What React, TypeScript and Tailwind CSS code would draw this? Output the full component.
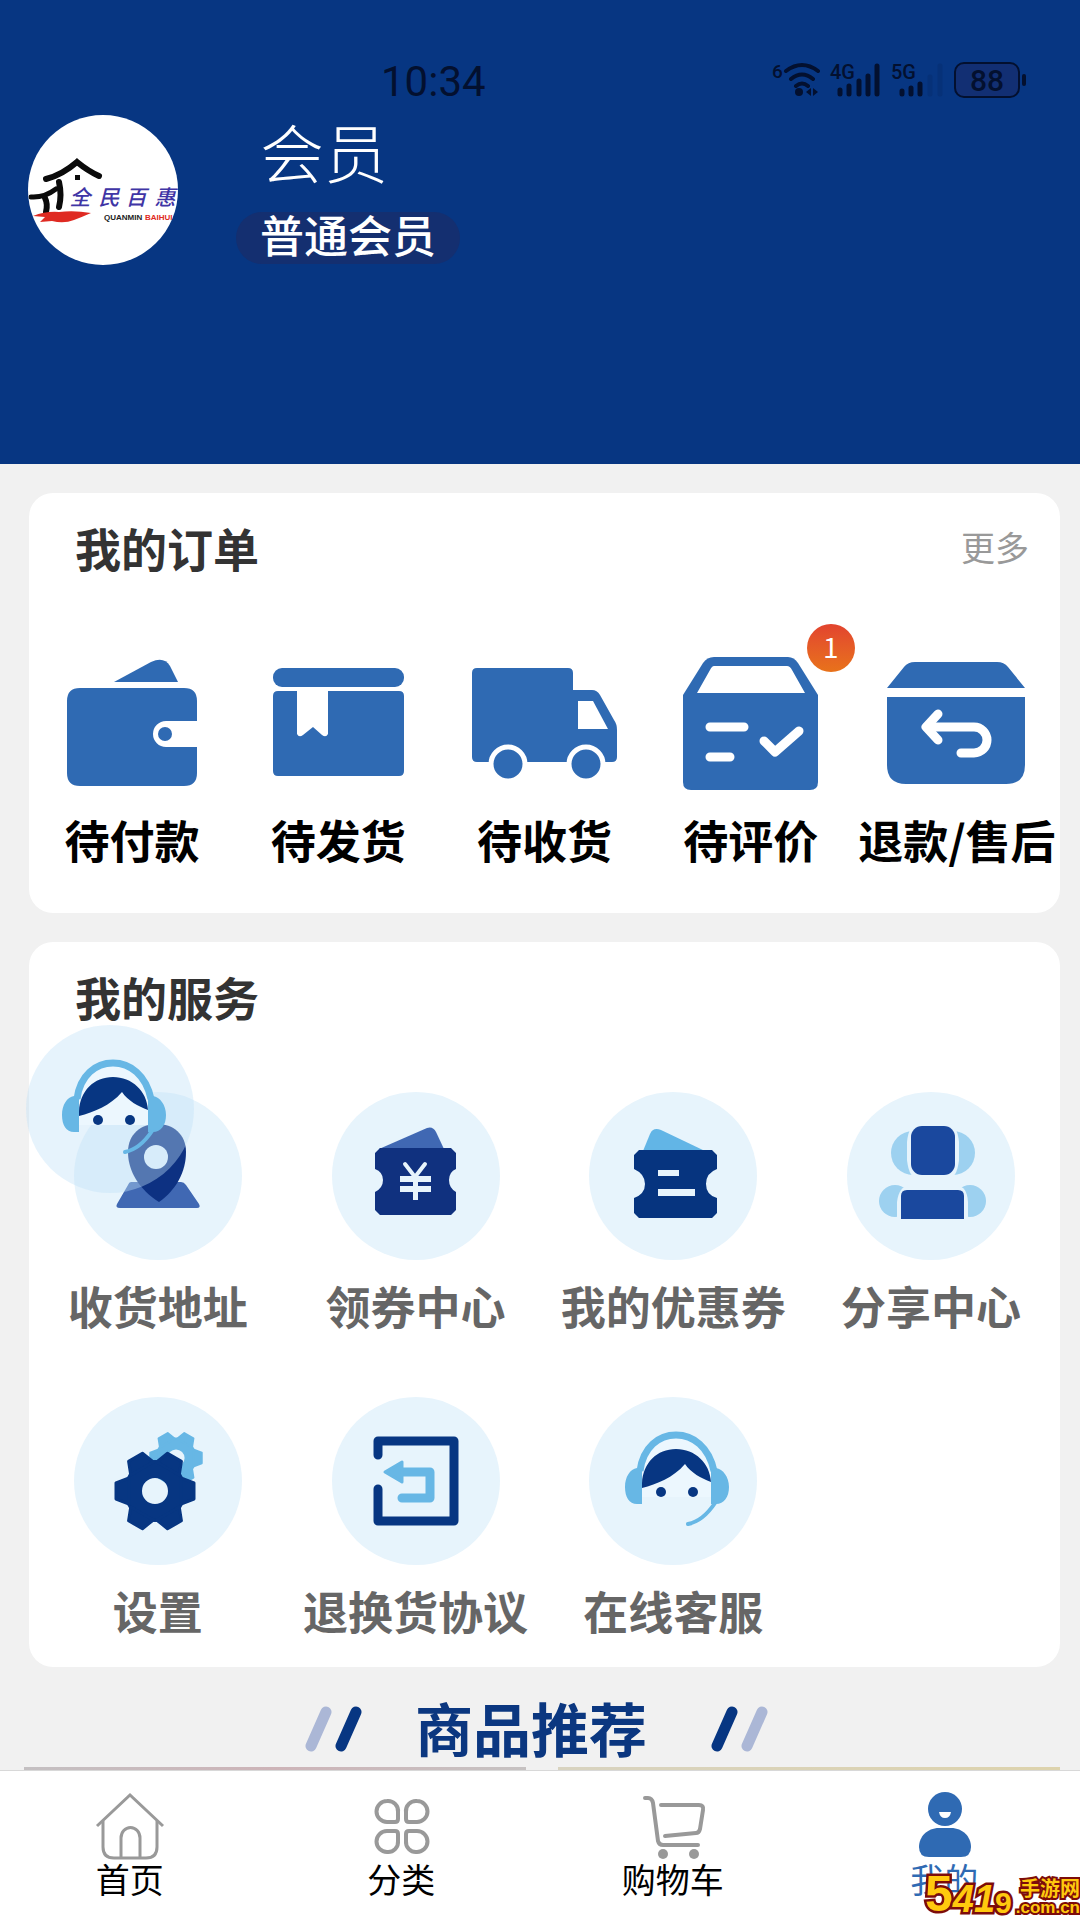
import React from "react";
import clsx from "clsx";

const NAVY = "#073682";
const BLUE = "#2f6ab3";
const SKY = "#67b7e5";
const PALE = "#e7f4fc";

function StatusBar() {
	return (
		<div className="flex h-[115px] items-start text-[#03102f]">
			<time className="ml-[381px] mt-[57px] font-[Roboto] text-[42px] leading-[50px]">
				10:34
			</time>
			<svg
				viewBox="0 0 260 44"
				className="ml-auto mr-[52px] mt-[58px] h-[44px] w-[260px]"
				fill="none"
				stroke="currentColor"
				fontFamily="Roboto, sans-serif"
			>
				<g fill="currentColor" stroke="none" fontWeight="500">
					<text x="4" y="20" fontSize="19">6</text>
					<text x="62" y="21" fontSize="20">4G</text>
					<text x="123" y="21" fontSize="20">5G</text>
				</g>
				<g strokeWidth="4" strokeLinecap="round">
					<path d="M18 13Q34 1 50 13M23 21Q34 12 45 21M28 28Q34 23 40 28" />
				</g>
				<g fill="currentColor" stroke="none">
					<circle cx="31" cy="34" r="4" />
					<path d="M43 30v8l-5-4zM45 30v8l5-4z" />
				</g>
				<g strokeWidth="5" strokeLinecap="round">
					<path d="M72 32v4M81 28v8M91 23v13M100 18v18M109 8v28" />
					<path d="M134 33v3M143 30v6M152 26v10" />
					<path d="M162 19v17M172 8v28" opacity=".12" />
				</g>
				<rect x="187" y="5" width="64" height="34" rx="9" fill="#122f73" strokeWidth="2" />
				<path d="M256 18v8" strokeWidth="4" strokeLinecap="round" />
				<text
					x="219"
					y="33"
					fontSize="30"
					fontWeight="500"
					textAnchor="middle"
					fill="currentColor"
					stroke="none"
				>
					88
				</text>
			</svg>
		</div>
	);
}

function Logo() {
	return (
		<svg viewBox="0 0 150 150" className="h-[150px] w-[150px] shrink-0 rounded-full bg-white">
			<g fill="none" stroke="#0b0b0b" strokeWidth="6" strokeLinecap="round">
				<path d="M18 64Q34 60 49 47Q60 56 71 61" />
				<path d="M3 82Q16 83 28 74" strokeWidth="5" />
				<path d="M17 83Q20 89 18 97M31 67Q34 80 31 92" />
			</g>
			<rect x="47" y="60" width="5" height="5" fill="#0b0b0b" />
			<path d="M5 101Q18 96 31 97Q46 95 63 98Q54 102 46 105Q36 109 24 106L12 107L17 102Z" fill="#df2a22" />
			<g
				fill="#3f35a5"
				fontFamily="'Noto Sans CJK SC', sans-serif"
				fontWeight="500"
				fontSize="21"
				fontStyle="italic"
				textAnchor="middle"
			>
				<text x="52" y="90">全</text>
				<text x="81" y="90">民</text>
				<text x="108" y="90">百</text>
				<text x="137" y="90">惠</text>
			</g>
			<g fontFamily="'Liberation Sans', sans-serif" fontWeight="700" fontSize="8">
				<text x="76" y="105" fill="#222">QUANMIN</text>
				<text x="117" y="105" fill="#df2a22">BAIHUI</text>
			</g>
		</svg>
	);
}

function WalletIcon() {
	return (
		<svg viewBox="0 0 150 150" className="h-[150px] w-[150px]" fill={BLUE}>
			<path d="M57 32L94 12Q107 6 113 16L121 32Z" />
			<path d="M23 38H127Q140 38 140 51V71H109A13 13 0 0 0 109 97H140V123Q140 136 127 136H23Q10 136 10 123V51Q10 38 23 38Z" />
			<circle cx="108" cy="84" r="7" />
		</svg>
	);
}

function ParcelIcon() {
	return (
		<svg viewBox="0 0 150 150" className="h-[150px] w-[150px]" fill={BLUE}>
			<rect x="10" y="18" width="131" height="19" rx="9" />
			<path d="M15 41H34V84Q36 88 40 85L50 77L59 85Q63 88 65 84V41H136Q141 41 141 46V121Q141 126 136 126H15Q10 126 10 121V46Q10 41 15 41Z" />
		</svg>
	);
}

function TruckIcon() {
	return (
		<svg viewBox="0 0 150 150" className="h-[150px] w-[150px]" fill={BLUE}>
			<path d="M8 18H99Q104 18 104 23V40H123Q128 40 131 45L145 70Q148 74 148 80V107Q148 112 143 112H8Q3 112 3 107V23Q3 18 8 18Z" />
			<path d="M109 51H124L139 79H109Z" fill="#fff" />
			<g stroke="#fff" strokeWidth="5">
				<circle cx="39" cy="114" r="17" />
				<circle cx="117" cy="114" r="17" />
			</g>
		</svg>
	);
}

function ReviewIcon() {
	return (
		<svg viewBox="0 0 150 150" className="h-[150px] w-[150px]" fill={BLUE}>
			<path d="M38 7H112Q118 7 122 13L142 45V132Q142 140 134 140H15Q7 140 7 132V45L27 13Q31 7 38 7Z" />
			<path d="M38 16H111Q114 16 116 20L129 43H21L34 20Q36 16 38 16Z" fill="#fff" />
			<g fill="none" stroke="#fff" strokeWidth="9" strokeLinecap="round" strokeLinejoin="round">
				<path d="M34 77H68M34 107H54" />
				<path d="M88 91L99 102L123 81" />
			</g>
		</svg>
	);
}

function RefundIcon() {
	return (
		<svg viewBox="0 0 150 150" className="h-[150px] w-[150px]" fill={BLUE}>
			<path d="M5 38L22 17Q26 12 33 12H115Q122 12 126 17L143 38Z" />
			<path d="M5 47H143V115Q143 134 124 134H24Q5 134 5 115Z" />
			<g fill="none" stroke="#fff" strokeWidth="9" strokeLinecap="round" strokeLinejoin="round">
				<path d="M79 103H92A13 13 0 0 0 92 77H45" />
				<path d="M56 64L44 77L56 90" />
			</g>
		</svg>
	);
}

function AddressArt() {
	return (
		<>
			<path d="M57 90H107Q110 90 112 93L125 112Q127 116 123 116H46Q41 116 43 112L54 93Q55 90 57 90Z" fill="#4068b3" />
			<path d="M54 60C54 42 67 32 83 32S112 42 112 60C112 80 102 98 85 110C66 98 54 80 54 60Z" fill="#0d3182" />
			<circle cx="82" cy="65" r="12" fill={PALE} />
		</>
	);
}

function CouponCenterArt() {
	return (
		<>
			<path d="M47 57L95 36Q101 34 104 40L112 57Z" fill="#4068b3" />
			<path d="M48 56H119L124 61V77Q117 80 117 88T124 100V118L119 123H48L43 118V100Q51 96 51 88T43 77V61Z" fill="#10317f" />
			<path d="M73 72L83 85L93 72" fill="none" stroke={PALE} strokeWidth="4" strokeLinecap="round" />
			<path d="M68 84H99V90H68ZM68 94H99V100H68ZM81 84H86V108H81Z" fill={PALE} />
		</>
	);
}

function CouponArt() {
	return (
		<>
			<path d="M54 59L61 42Q64 35 72 38L116 59Z" fill="#62b5e6" />
			<path d="M50 58H123L128 63V77Q117 81 117 92T128 106V121L123 126H50L45 121V106Q56 102 56 92T45 77V63Z" fill="#06347f" />
			<path d="M69 78H90V84H69ZM69 97H106V104H69Z" fill={PALE} />
		</>
	);
}

function ShareArt() {
	return (
		<>
			<g fill="#9dd1f0">
				<circle cx="66" cy="61" r="22" />
				<circle cx="106" cy="61" r="22" />
				<circle cx="48" cy="109" r="16" />
				<circle cx="123" cy="109" r="16" />
			</g>
			<path d="M60 50Q62 31 72 31H100Q110 31 112 50V68Q110 87 100 87H72Q62 87 60 68Z" fill={PALE} />
			<path d="M50 130V110Q52 94 62 94H110Q120 94 121 110V130Z" fill={PALE} />
			<rect x="64" y="34" width="44" height="49" rx="11" fill="#1a489e" />
			<path d="M54 127V104Q54 98 60 98H111Q117 98 117 104V127Z" fill="#1a489e" />
		</>
	);
}

function Gear(props: { color: string; transform: string; hole: number }) {
	return (
		<g transform={props.transform} fill={props.color} stroke={props.color} strokeLinejoin="round">
			<circle r={(30 + props.hole) / 2} fill="none" strokeWidth={32 - props.hole} />
			{[0, 60, 120, 180, 240, 300].map((angle) => (
				<path
					key={angle}
					d="M26 -13L39 -8V8L26 13Z"
					strokeWidth="3"
					transform={`rotate(${angle})`}
				/>
			))}
		</g>
	);
}

function SettingsArt() {
	return (
		<>
			<Gear color={SKY} transform="translate(102 61) scale(.66)" hole={14} />
			<Gear color={NAVY} transform="translate(81 94)" hole={14} />
		</>
	);
}

function ReturnArt() {
	return (
		<g fill="none" strokeWidth="9" strokeLinecap="round" strokeLinejoin="round">
			<path d="M46 58V44H122V124H46V92" stroke={NAVY} />
			<path d="M68 75H98V101H70" stroke={SKY} />
			<path d="M53 75L70 65V85Z" fill={SKY} stroke={SKY} strokeWidth="3" />
		</g>
	);
}

function HeadsetArt() {
	return (
		<>
			<path d="M53 78A34 38 0 0 1 122 78V100H53Z" fill="#ecf7fe" />
			<path d="M53 91V86C54 66 68 52 87 52S121 66 122 85C112 81 102 76 96 67C84 81 68 87 53 91Z" fill={NAVY} />
			<path d="M51 74C54 50 70 38 87 38S120 50 125 74" fill="none" stroke={SKY} strokeWidth="7" />
			<path d="M53 71V107H48C40 107 36 100 36 90C36 80 41 72 48 71ZM122 71V107H127C135 107 140 100 140 90C140 80 134 72 127 71Z" fill={SKY} />
			<path d="M126 106Q114 124 99 127" fill="none" stroke={SKY} strokeWidth="4" strokeLinecap="round" />
			<circle cx="72" cy="95" r="5" fill={NAVY} />
			<circle cx="104" cy="95" r="5" fill={NAVY} />
		</>
	);
}

function HomeIcon() {
	return (
		<svg viewBox="0 0 72 72" className="h-[72px] w-[72px]" fill="none" stroke="#999" strokeWidth="3">
			<path d="M3 36L36 5L69 36" />
			<path d="M9 31V57Q9 68 20 68H52Q63 68 63 57V31" />
			<path d="M27 68V48A9 10 0 0 1 46 48V68" />
		</svg>
	);
}

function CategoryIcon() {
	return (
		<svg viewBox="0 0 72 72" className="h-[72px] w-[72px]" fill="none" stroke="#999" strokeWidth="4">
			<path d="M22 11A10 10 0 0 0 22 32H30Q33 32 33 29V22A10 10 0 0 0 22 11Z" />
			<path d="M52 11A10 10 0 0 1 52 32H44Q41 32 41 29V22A10 10 0 0 1 52 11Z" />
			<path d="M22 62A10 10 0 0 1 22 41H30Q33 41 33 44V51A10 10 0 0 1 22 62Z" />
			<path d="M52 62A10 10 0 0 0 52 41H44Q41 41 41 44V51A10 10 0 0 0 52 62Z" />
		</svg>
	);
}

function CartIcon() {
	return (
		<svg
			viewBox="0 0 72 72"
			className="h-[72px] w-[72px]"
			fill="none"
			stroke="#999"
			strokeWidth="4"
			strokeLinecap="round"
			strokeLinejoin="round"
		>
			<path d="M8 8H11Q15 8 16 13L21 51Q22 55 26 55H61" />
			<path d="M24 15H62Q67 15 66 20L63 39Q62 43 59 43L28 46" />
			<g fill="#999" stroke="none">
				<circle cx="26" cy="64" r="5" />
				<circle cx="57" cy="64" r="5" />
			</g>
		</svg>
	);
}

function MineIcon() {
	return (
		<svg viewBox="0 0 72 72" className="h-[72px] w-[72px]" fill={BLUE}>
			<circle cx="37" cy="19" r="17" />
			<path d="M31 22H43Q42 28 37 28T31 22Z" fill="#fff" />
			<path d="M31 38H43C55 38 63 47 63 57Q63 67 53 67H21Q11 67 11 57C11 47 19 38 31 38Z" />
		</svg>
	);
}

const orders = [
	{ label: "待付款", icon: WalletIcon },
	{ label: "待发货", icon: ParcelIcon },
	{ label: "待收货", icon: TruckIcon },
	{ label: "待评价", icon: ReviewIcon, count: 1 },
	{ label: "退款/售后", icon: RefundIcon },
];

const services = [
	{ label: "收货地址", art: AddressArt },
	{ label: "领券中心", art: CouponCenterArt },
	{ label: "我的优惠券", art: CouponArt },
	{ label: "分享中心", art: ShareArt },
	{ label: "设置", art: SettingsArt },
	{ label: "退换货协议", art: ReturnArt },
	{ label: "在线客服", art: HeadsetArt },
];

const tabs = [
	{ label: "首页", icon: HomeIcon },
	{ label: "分类", icon: CategoryIcon },
	{ label: "购物车", icon: CartIcon },
	{ label: "我的", icon: MineIcon, active: true },
];

function OrderItem(props: { label: string; icon: React.FC; count?: number }) {
	return (
		<button type="button" className="flex flex-col items-center gap-[18px]">
			<span className="relative">
				<props.icon />
				{props.count && (
					<span className="absolute -top-[26px] left-[131px] flex h-12 w-12 items-center justify-center rounded-full bg-linear-to-b from-[#e2432e] to-[#e8721a] pb-1 text-[28px] text-white">
						{props.count}
					</span>
				)}
			</span>
			<span className="whitespace-nowrap text-[45px] font-bold leading-[44px] text-black">
				{props.label}
			</span>
		</button>
	);
}

function ServiceItem(props: { label: string; art: React.FC }) {
	return (
		<button type="button" className="flex flex-col items-center gap-6">
			<svg viewBox="0 0 168 168" className="h-[168px] w-[168px] rounded-full bg-[#e7f4fc]">
				<props.art />
			</svg>
			<span className="whitespace-nowrap text-[45px] font-bold leading-[44px] text-[#666]">
				{props.label}
			</span>
		</button>
	);
}

function Slashes(props: { className: string; first: string; second: string }) {
	return (
		<svg
			viewBox="0 0 58 46"
			className={clsx("h-[46px] w-[58px]", props.className)}
			strokeWidth="11"
			strokeLinecap="round"
		>
			<path d="M21 6L6 40" stroke={props.first} />
			<path d="M51 6L36 40" stroke={props.second} />
		</svg>
	);
}

function Watermark() {
	return (
		<div className="pointer-events-none absolute bottom-0 right-0 flex items-end gap-1 font-['Liberation_Sans','Noto_Sans_CJK_SC',sans-serif] font-bold text-[#ffc90e] [-webkit-text-stroke:5px_#7d0c0a] [paint-order:stroke_fill]">
			<span className="flex items-end">
				<span className="text-[50px] leading-[52px]">5</span>
				<span className="text-[38px] italic leading-[42px]">41</span>
				<span className="text-[30px] leading-[34px]">9</span>
			</span>
			<span className="flex flex-col pb-1 text-right [-webkit-text-stroke:4px_#7d0c0a]">
				<span className="text-[20px] leading-[20px]">手游网</span>
				<span className="text-[17px] leading-[17px]">.com.cn</span>
			</span>
		</div>
	);
}

export default function App() {
	return (
		<div className="relative flex h-screen flex-col bg-[#f1f1f1] font-['Noto_Sans_CJK_SC',sans-serif]">
			<main className="min-h-0 flex-1 overflow-y-auto [scrollbar-width:none]">
				<header className="h-[464px] bg-[#073682]">
					<StatusBar />
					<div className="flex pl-7">
						<Logo />
						<div className="ml-[58px] flex flex-col items-start">
							<h1 className="ml-6 text-[64px] font-light leading-[70px] text-white">会员</h1>
							<span className="mt-[27px] flex h-[52px] items-center rounded-full bg-[#142f70] px-6 pb-2 text-[44px] font-medium text-white">
								普通会员
							</span>
						</div>
					</div>
				</header>

				<div className="flex flex-col gap-[29px] pl-[29px] pr-5 pt-[29px]">
					<section className="rounded-3xl bg-white pb-[51px] pt-6">
						<div className="flex items-center justify-between pl-[46px] pr-[31px]">
							<h2 className="text-[46px] font-bold leading-[60px] text-[#333]">我的订单</h2>
							<a href="#orders" className="text-[34px] leading-[60px] text-[#999]">
								更多
							</a>
						</div>
						<div className="mt-[73px] grid grid-cols-5">
							{orders.map((item) => (
								<OrderItem key={item.label} {...item} />
							))}
						</div>
					</section>

					<section className="relative rounded-3xl bg-white pb-[34px] pt-6">
						<h2 className="pl-[46px] text-[46px] font-bold leading-[60px] text-[#333]">我的服务</h2>
						<div className="mt-[66px] grid grid-cols-4 gap-y-[69px]">
							{services.map((item) => (
								<ServiceItem key={item.label} {...item} />
							))}
						</div>
						<button
							type="button"
							aria-label="在线客服"
							className="absolute -left-[3px] top-[83px] rounded-full bg-[#c0e1f7]/40"
						>
							<svg viewBox="0 0 168 168" className="h-[168px] w-[168px]">
								<HeadsetArt />
							</svg>
						</button>
					</section>
				</div>

				<div className="flex items-center justify-center pr-1.5 pt-6">
					<Slashes className="mr-[52px]" first="#abb7d6" second={NAVY} />
					<h2 className="pb-1 text-[58px] font-bold leading-[72px] text-[#0b3780]">商品推荐</h2>
					<Slashes className="ml-[64px]" first={NAVY} second="#abb7d6" />
				</div>
				<div className="grid grid-cols-2 gap-8 pl-6 pr-5">
					<div className="h-1 bg-linear-to-r from-[#c4c0c2] via-[#cdb4b8] to-[#c6c2c2]" />
					<div className="h-1 bg-linear-to-r from-[#d8d3c0] to-[#ddd3ad]" />
				</div>
			</main>

			<nav className="-ml-1.5 grid h-[150px] grid-cols-4 border-t border-[#d8d8d8] bg-white pt-[19px]">
				{tabs.map((tab) => (
					<a key={tab.label} href="#tab" className="flex flex-col items-center">
						<tab.icon />
						<span
							className={clsx(
								"text-[34px] leading-[34px]",
								tab.active ? "text-[#2f6ab3]" : "text-black",
							)}
						>
							{tab.label}
						</span>
					</a>
				))}
			</nav>
			<Watermark />
		</div>
	);
}
